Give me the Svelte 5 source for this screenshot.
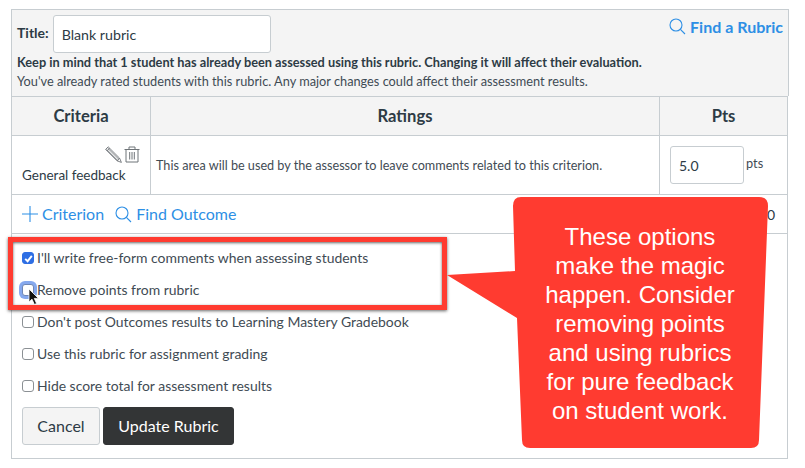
<script>
  const options = [
    { label: "I'll write free-form comments when assessing students", checked: true },
    { label: 'Remove points from rubric', focus: true },
    { label: "Don't post Outcomes results to Learning Mastery Gradebook" },
    { label: 'Use this rubric for assignment grading' },
    { label: 'Hide score total for assessment results' }
  ];
  const lines = ['These options', 'make the magic', 'happen. Consider', 'removing points', 'and using rubrics', 'for pure feedback', 'on student work.'];
</script>

<div class="page">
  <div class="rubric">
    <header class="head">
      <div class="title-row">
        <div class="title-left">
          <span class="title-label">Title:</span>
          <input class="title-input" value="Blank rubric" />
        </div>
        <a class="find-rubric">
          <svg width="17" height="17" viewBox="0 0 17 17" fill="none" stroke="#2d8fe5" stroke-width="1.1"><circle cx="7" cy="7" r="6"/><path d="M11.4 11.4 16 16"/></svg>
          Find a Rubric
        </a>
      </div>
      <p class="warn-strong">Keep in mind that 1 student has already been assessed using this rubric. Changing it will affect their evaluation.</p>
      <p class="warn">You've already rated students with this rubric. Any major changes could affect their assessment results.</p>
    </header>

    <div class="table">
      <div class="cell th">Criteria</div>
      <div class="cell th">Ratings</div>
      <div class="cell th last">Pts</div>

      <div class="cell crit">
        <div class="crit-icons">
          <svg width="17" height="17" viewBox="0 0 17 17" fill="none" stroke="#6f7478" stroke-width="0.9"><path d="M0.6 3.4 3.2 0.8 14.6 12.2 16.4 16.4 12 14.8Z"/><path d="M2 4.8 4.6 2.2M2.6 2 14 13.4 M1.6 3.4 13 14.8M12 14.8 14.6 12.2"/></svg>
          <svg width="16" height="17" viewBox="0 0 16 17" fill="none" stroke="#6f7478" stroke-width="1"><path d="M0.5 3.5H15.5M5 3.5V1H11V3.5M2 3.5V16H14V3.5M5.7 6V13.5M8 6V13.5M10.3 6V13.5"/></svg>
        </div>
        <div class="crit-name">General feedback</div>
      </div>
      <div class="cell desc">This area will be used by the assessor to leave comments related to this criterion.</div>
      <div class="cell pts last">
        <input class="pts-input" value="5.0" />
        <span class="pts-unit">pts</span>
      </div>
    </div>

    <div class="add-row">
      <a class="add">
        <svg width="16" height="16" viewBox="0 0 16 16" fill="none" stroke="#2d8fe5" stroke-width="1.1"><path d="M8 0V16M0 8H16"/></svg>
        <span class="add-label">Criterion</span>
      </a>
      <a class="add">
        <svg width="17" height="17" viewBox="0 0 17 17" fill="none" stroke="#2d8fe5" stroke-width="1.1"><circle cx="7" cy="7" r="6"/><path d="M11.4 11.4 16 16"/></svg>
        <span class="add-label">Find Outcome</span>
      </a>
      <span class="total">0</span>
    </div>

    <div class="options">
      {#each options as o}
        <label class="opt">
          <span class="box" class:checked={o.checked} class:focus={o.focus}>
            <input type="checkbox" checked={o.checked} />
            {#if o.checked}
              <svg width="11" height="11" viewBox="0 0 11 11" fill="none" stroke="#fff" stroke-width="1.9"><path d="M2.2 5.8 4.6 8.2 8.8 2.8"/></svg>
            {/if}
          </span>
          <span class="opt-label">{o.label}</span>
        </label>
      {/each}
      <div class="actions">
        <button class="btn cancel">Cancel</button>
        <button class="btn update">Update Rubric</button>
      </div>
    </div>
  </div>

  <div class="highlight"></div>

  <svg class="cursor" width="13" height="18" viewBox="0 0 13 18"><path d="M1 1V14L4 11.2 6.4 16.5 8.6 15.5 6.3 10.4H10.4Z" fill="#111" stroke="#fff" stroke-width="0.8"/></svg>

  <div class="callout">
    <svg class="callout-shape" width="340" height="270" viewBox="0 0 340 270">
      <path d="M74 2H312Q321 2 321 11L312 245Q312 253 304 253H83Q75 253 75 245L70 123 0 80 68 76 66 11Q66 2 74 2Z" fill="#ff3b30"/>
    </svg>
    <div class="callout-text">
      {#each lines as l}<div>{l}</div>{/each}
    </div>
  </div>
</div>

<style>
  :global(body) { background: #fff; }
  .page {
    position: relative;
    width: 805px;
    height: 468px;
    padding: 9px 0 0 11px;
    box-sizing: border-box;
    overflow: hidden;
    font-family: Lato, sans-serif;
    color: #2d3b45;
  }
  .rubric {
    width: 777px;
    height: 450px;
    box-sizing: border-box;
    border: 1px solid #c7cdd1;
    border-top: 0;
  }
  .head {
    width: 777px;
    height: 87px;
    box-sizing: border-box;
    background: #f4f4f4;
    border-top: 1px solid #c7cdd1;
    border-right: 1px solid #c7cdd1;
    padding: 5px 4px 0 5px;
  }
  .title-row { display: flex; justify-content: space-between; height: 38px; }
  .title-left { display: flex; align-items: center; gap: 4px; }
  .title-label { font-size: 14px; font-weight: 700; position: relative; top: -2px; }
  .title-input {
    width: 218px;
    height: 38px;
    box-sizing: border-box;
    border: 1px solid #c7cdd1;
    border-radius: 3px;
    padding: 0 8px;
    font: 14.2px Lato, sans-serif;
    color: #2d3b45;
    background: #fff;
  }
  .find-rubric {
    display: flex;
    align-items: center;
    gap: 4px;
    height: 26px;
    margin-top: -2px;
    margin-right: 1px;
    font-size: 16px;
    font-weight: 700;
    color: #2d8fe5;
  }
  p { margin: 0; line-height: 19px; }
  .warn-strong { font-size: 12.75px; font-weight: 700; }
  .warn { font-size: 12.75px; color: #3f4b54; }
  .table {
    display: grid;
    grid-template-columns: 139px 509px 1fr;
    grid-template-rows: 39px 59px;
    border-top: 1px solid #c7cdd1;
  }
  .cell {
    box-sizing: border-box;
    border-right: 1px solid #c7cdd1;
    border-bottom: 1px solid #c7cdd1;
  }
  .cell.last { border-right: 0; }
  .th {
    background: #f4f4f4;
    display: flex;
    align-items: center;
    justify-content: center;
    font-size: 16.6px;
    font-weight: 700;
  }
  .crit { position: relative; padding: 10px 0 0 10px; }
  .crit-icons { display: flex; justify-content: flex-end; gap: 2px; padding-right: 10px; height: 17px; }
  .crit-name { font-size: 13.5px; margin-top: 3px; line-height: 18px; }
  .desc { display: flex; align-items: center; padding-left: 5px; font-size: 12.65px; color: #3f4b54; }
  .pts { display: flex; align-items: center; padding-left: 10px; gap: 2px; }
  .pts-input {
    width: 74px;
    height: 38px;
    box-sizing: border-box;
    border: 1px solid #c7cdd1;
    border-radius: 3px;
    padding: 0 8px;
    font: 14px Lato, sans-serif;
    color: #2d3b45;
    background: #fff;
  }
  .pts-unit { font-size: 12.75px; color: #3f4b54; position: relative; top: -2px; }
  .add-row {
    display: flex;
    align-items: center;
    gap: 11px;
    height: 39px;
    box-sizing: border-box;
    border-bottom: 1px solid #c7cdd1;
    padding: 0 12px 0 10px;
  }
  .add { display: flex; align-items: center; gap: 4px; font-size: 16px; color: #2d8fe5; }
  .add-label { position: relative; top: -1px; }
  .total { margin-left: auto; font-size: 14px; }
  .options { padding: 8px 0 0 10px; }
  .opt { display: flex; align-items: center; gap: 3px; height: 32px; font-size: 13.95px; color: #3f4b54; }
  .opt-label { position: relative; top: -1px; }
  .box {
    position: relative;
    width: 12px;
    height: 12px;
    box-sizing: border-box;
    border: 1px solid #8b9094;
    border-radius: 3px;
    background: #fff;
    flex: none;
  }
  .box input { position: absolute; inset: 0; margin: 0; opacity: 0; width: 100%; height: 100%; }
  .box svg { position: absolute; left: 0; top: 0; }
  .box.checked { background: #2f6fe4; border-color: #2f6fe4; }
  .box.focus { box-shadow: 0 0 0 3px #86a9ee; border-color: #6f87b5; }
  .actions { display: flex; gap: 3px; margin-top: 5px; }
  .btn {
    height: 38px;
    box-sizing: border-box;
    border-radius: 3px;
    padding: 0 0 2px;
    font: 16px Lato, sans-serif;
  }
  .cancel { width: 78px; background: #f4f4f4; border: 1px solid #c7cdd1; color: #2d3b45; }
  .update { width: 131px; background: #333536; border: 1px solid #333536; color: #fff; }
  .highlight {
    position: absolute;
    left: 8px;
    top: 237px;
    width: 439px;
    height: 73px;
    box-sizing: border-box;
    border: 5px solid #ff3b30;
    box-shadow: 0 1px 3px rgba(0,0,0,.6), inset 0 1px 3px rgba(0,0,0,.6);
  }
  .cursor { position: absolute; left: 28px; top: 288px; }
  .callout { position: absolute; left: 447px; top: 195px; width: 340px; height: 270px; }
  .callout-shape { position: absolute; left: 0; top: 0; }
  .callout-text {
    position: absolute;
    left: 93px;
    top: 27px;
    width: 200px;
    text-align: center;
    font: 24px/29px "Liberation Sans", Arial, sans-serif;
    color: #fff;
  }
</style>
